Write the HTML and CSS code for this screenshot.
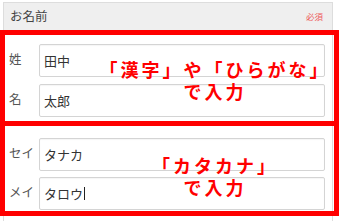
FILE: index.html
```html
<!DOCTYPE html>
<html lang="ja">
<head>
<meta charset="utf-8">
<link rel="stylesheet" href="styles.css">
</head>
<body>
<div class="panel">
  <div class="panel-head">
    <span class="head-title">お名前</span>
    <span class="head-req">必須</span>
  </div>
  <div class="group group-kanji">
    <div class="row">
      <span class="label">姓</span>
      <div class="field">田中</div>
    </div>
    <div class="row">
      <span class="label">名</span>
      <div class="field">太郎</div>
    </div>
  </div>
  <div class="group group-kana">
    <div class="row">
      <span class="label">セイ</span>
      <div class="field">タナカ</div>
    </div>
    <div class="row">
      <span class="label">メイ</span>
      <div class="field">タロウ<span class="caret"></span></div>
    </div>
  </div>
</div>
<div class="mark mark-frame"></div>
<div class="mark mark-divider"></div>
<div class="note note-kanji">「漢字」や「ひらがな」<br>で入力</div>
<div class="note note-kana">「カタカナ」<br>で入力</div>
</body>
</html>
```

FILE: styles.css
```css
html, body {
  margin: 0;
  padding: 0;
  background: #ffffff;
  width: 339px;
  height: 221px;
  overflow: hidden;
  position: relative;
  font-family: "Noto Sans CJK JP", "Noto Sans", sans-serif;
}

.panel {
  margin: 2px 0 0 3px;
  width: 330px;
  height: 219px;
  box-sizing: border-box;
  border: 1px solid #dddddd;
  border-bottom: none;
  background: #ffffff;
  overflow: hidden;
}

.panel-head {
  height: 27px;
  background: #efefef;
  display: flex;
  align-items: center;
  justify-content: space-between;
  padding: 0 9px 0 6px;
}

.head-title {
  font-size: 12.5px;
  color: #444444;
  line-height: 1;
}

.head-req {
  font-size: 8.5px;
  color: #ee5a5a;
  line-height: 1;
}

.group {
  display: flex;
  flex-direction: column;
  gap: 7px;
}

.group-kanji {
  padding-top: 14px;
}

.group-kana {
  padding-top: 21px;
  gap: 6px;
}

.row {
  display: flex;
  align-items: center;
}

.label {
  width: 35px;
  box-sizing: border-box;
  padding-left: 5px;
  padding-bottom: 4px;
  font-size: 12.5px;
  color: #555555;
}

.field {
  width: 286px;
  height: 33px;
  box-sizing: border-box;
  border: 1px solid #d4d4d4;
  border-radius: 2px;
  box-shadow: inset 0 1px 1px rgba(0,0,0,0.04);
  padding-left: 4px;
  display: flex;
  align-items: center;
  font-size: 13px;
  color: #333333;
}

.caret {
  display: inline-block;
  width: 1px;
  height: 13px;
  background: #222222;
  margin-left: 1px;
}

.mark {
  position: absolute;
  box-sizing: border-box;
}

.mark-frame {
  left: 0;
  top: 30px;
  width: 339px;
  height: 186px;
  border: 5px solid #ff0000;
}

.mark-divider {
  left: 0;
  top: 121px;
  width: 339px;
  height: 5px;
  background: #ff0000;
}

.note {
  position: absolute;
  left: 95px;
  width: 240px;
  text-align: center;
  color: #ff0000;
  font-weight: bold;
  font-size: 18px;
  line-height: 22px;
  letter-spacing: 3px;
}

.note-kanji {
  top: 58px;
}

.note-kana {
  top: 154px;
}
```
